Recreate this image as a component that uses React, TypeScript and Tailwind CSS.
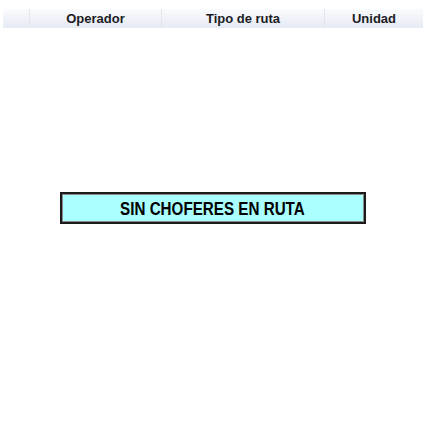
export default function App() {
  const columns = [
    { label: '', width: 'w-[26px]' },
    { label: 'Operador', width: 'w-[132px]' },
    { label: 'Tipo de ruta', width: 'w-[163px]' },
    { label: 'Unidad', width: 'flex-1' },
  ];

  return (
    <div className="w-[425px] h-[425px] bg-white font-['Liberation_Sans',Arial,sans-serif]">
      {/* Table header */}
      <div className="pt-[9px] pl-[3px] pr-[2px]">
        <div className="flex h-[19px] bg-gradient-to-b from-[#fafbfd] to-[#e6eaf4]">
          {columns.map((col, index) => (
            <div
              key={index}
              className={`${col.width} flex items-center justify-center pt-[1px] text-[13px] font-bold text-[#1c1c24] ${
                index > 0 ? 'border-l border-[#e2e5ec]' : ''
              }`}
            >
              {col.label}
            </div>
          ))}
        </div>
      </div>

      {/* Empty state */}
      <div className="flex justify-center mt-[164px]">
        <div className="w-[306px] h-[32px] flex items-center justify-center bg-[#aaffff] border-2 border-[#1a1a1a] shadow-[inset_0_0_0_1px_#8a8a8a]">
          <span className="inline-block text-[19px] leading-none font-bold text-black scale-x-[0.8]">
            SIN CHOFERES EN RUTA
          </span>
        </div>
      </div>
    </div>
  );
}
